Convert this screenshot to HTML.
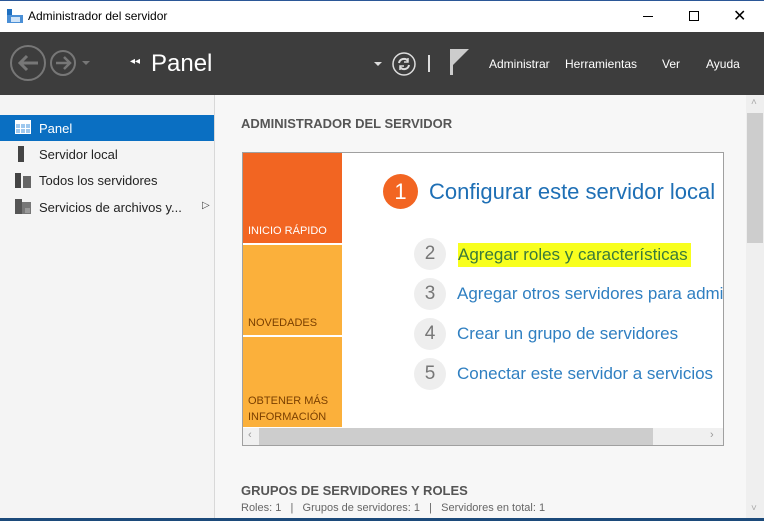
<!DOCTYPE html>
<html><head><meta charset="utf-8"><style>
*{margin:0;padding:0;box-sizing:border-box}
body{width:764px;height:521px;overflow:hidden;background:#f7f7f7;font-family:"Liberation Sans",sans-serif;position:relative}
.abs{position:absolute}
.t{white-space:nowrap}
</style></head><body>
<div class="abs" style="left:0;top:0;width:764px;height:1px;background:#2b5797"></div>
<div class="abs" style="left:0;top:1px;width:764px;height:31px;background:#fff"></div>
<svg class="abs" style="left:7px;top:9px" width="16" height="14"><rect x="0" y="0" width="5" height="6" fill="#1e6fc0"/><rect x="0" y="6" width="16" height="8" fill="#4a8fd6"/><rect x="4" y="8" width="9" height="5" fill="#cfe3f7"/></svg>
<div class="abs t" style="left:28px;top:9px;font-size:12px;color:#000">Administrador del servidor</div>
<div class="abs" style="left:643px;top:16px;width:10px;height:1px;background:#000"></div>
<div class="abs" style="left:689px;top:11px;width:10px;height:10px;border:1px solid #000"></div>
<div class="abs t" style="left:733px;top:6px;font-size:16px;color:#000">✕</div>
<div class="abs" style="left:0;top:32px;width:764px;height:63px;background:#3d3d3d"></div>
<svg class="abs" style="left:9px;top:44px" width="90" height="38">
<circle cx="19" cy="19" r="17" fill="none" stroke="#777" stroke-width="2"/>
<path d="M29 19H11M18 12l-7 7 7 7" fill="none" stroke="#777" stroke-width="3"/>
<circle cx="54" cy="19" r="12" fill="none" stroke="#777" stroke-width="2"/>
<path d="M47 19h13M55 13l6 6-6 6" fill="none" stroke="#777" stroke-width="2.5"/>
<path d="M73 17h8l-4 4z" fill="#777"/>
</svg>
<div class="abs t" style="left:130px;top:56px;font-size:10px;color:#fff">◂◂</div>
<div class="abs t" style="left:151px;top:50px;font-size:24px;color:#fff">Panel</div>
<div class="abs" style="left:374px;top:62px;width:0;height:0;border-left:4px solid transparent;border-right:4px solid transparent;border-top:4px solid #ddd"></div>
<svg class="abs" style="left:391px;top:51px" width="26" height="26"><circle cx="13" cy="13" r="11" fill="none" stroke="#ddd" stroke-width="1.5"/><path d="M8 12a5 5 0 0 1 9-2M18 14a5 5 0 0 1-9 2" fill="none" stroke="#ddd" stroke-width="2"/><path d="M17 7v4h-4M9 19v-4h4" fill="none" stroke="#ddd" stroke-width="1.5"/></svg>
<div class="abs" style="left:428px;top:55px;width:2px;height:17px;background:#ddd"></div>
<svg class="abs" style="left:449px;top:48px" width="22" height="28"><rect x="1" y="1" width="3" height="26" fill="#ccc"/><path d="M4 1h16l-16 16z" fill="#ccc"/></svg>
<div class="abs t" style="left:489px;top:57px;font-size:12px;color:#fff">Administrar</div>
<div class="abs t" style="left:565px;top:57px;font-size:12px;color:#fff">Herramientas</div>
<div class="abs t" style="left:662px;top:57px;font-size:12px;color:#fff">Ver</div>
<div class="abs t" style="left:706px;top:57px;font-size:12px;color:#fff">Ayuda</div>
<div class="abs" style="left:0;top:95px;width:215px;height:426px;background:#f4f4f4;border-right:1px solid #d8d8d8"></div>
<div class="abs" style="left:0;top:115px;width:214px;height:26px;background:#0a6fc2"></div>
<svg class="abs" style="left:15px;top:120px" width="16" height="14"><rect width="16" height="14" fill="#fff"/><g fill="#9ec8ee"><rect x="1" y="4" width="4" height="4"/><rect x="6" y="4" width="4" height="4"/><rect x="11" y="4" width="4" height="4"/><rect x="1" y="9" width="4" height="4"/><rect x="6" y="9" width="4" height="4"/><rect x="11" y="9" width="4" height="4"/></g></svg>
<div class="abs t" style="left:39px;top:121px;font-size:13px;color:#fff">Panel</div>
<div class="abs" style="left:18px;top:146px;width:6px;height:16px;background:#444"></div>
<div class="abs t" style="left:39px;top:147px;font-size:13px;color:#222">Servidor local</div>
<svg class="abs" style="left:15px;top:173px" width="16" height="15"><rect x="0" y="0" width="6" height="15" fill="#444"/><rect x="8" y="3" width="8" height="12" fill="#666"/></svg>
<div class="abs t" style="left:39px;top:173px;font-size:13px;color:#222">Todos los servidores</div>
<svg class="abs" style="left:15px;top:199px" width="16" height="15"><rect x="0" y="0" width="7" height="15" fill="#555"/><rect x="7" y="3" width="9" height="12" fill="#777"/><rect x="10" y="9" width="5" height="5" fill="#999"/></svg>
<div class="abs t" style="left:39px;top:200px;font-size:13px;color:#222">Servicios de archivos y...</div>
<div class="abs t" style="left:202px;top:200px;font-size:10px;color:#444">▷</div>
<div class="abs t" style="left:241px;top:116px;font-size:13px;font-weight:bold;color:#555">ADMINISTRADOR DEL SERVIDOR</div>
<div class="abs" style="left:242px;top:152px;width:482px;height:294px;background:#fff;border:1px solid #a0a0a0"></div>
<div class="abs" style="left:243px;top:153px;width:99px;height:90px;background:#f26522"></div>
<div class="abs t" style="left:248px;top:225px;font-size:11px;color:#fff">INICIO RÁPIDO</div>
<div class="abs" style="left:243px;top:245px;width:99px;height:90px;background:#fbb03b"></div>
<div class="abs t" style="left:248px;top:317px;font-size:11px;color:#7a3f00">NOVEDADES</div>
<div class="abs" style="left:243px;top:337px;width:99px;height:90px;background:#fbb03b"></div>
<div class="abs" style="left:248px;top:393px;font-size:11px;line-height:16px;color:#7a3f00">OBTENER MÁS<br>INFORMACIÓN</div>
<div class="abs" style="left:243px;top:428px;width:480px;height:17px;background:#f0f0f0"></div>
<div class="abs" style="left:259px;top:428px;width:394px;height:17px;background:#cdcdcd"></div>
<div class="abs t" style="left:248px;top:429px;font-size:11px;color:#999">‹</div>
<div class="abs t" style="left:710px;top:429px;font-size:11px;color:#999">›</div>
<div class="abs" style="left:383px;top:174px;width:35px;height:35px;border-radius:50%;background:#f26522;color:#fff;font-size:22px;text-align:center;line-height:35px">1</div>
<div class="abs t" style="left:429px;top:179px;font-size:22px;color:#1e6fb5;width:294px;overflow:hidden">Configurar este servidor local</div>
<div class="abs" style="left:414px;top:238px;width:32px;height:32px;border-radius:50%;background:#eee;color:#777;font-size:19px;text-align:center;line-height:32px">2</div>
<div class="abs t" style="left:458px;top:243px;font-size:17px;line-height:24px;color:#3a7a3a;background:#f8ff1e;padding-right:3px">Agregar roles y características</div>
<div class="abs" style="left:414px;top:278px;width:32px;height:32px;border-radius:50%;background:#eee;color:#777;font-size:19px;text-align:center;line-height:32px">3</div>
<div class="abs t" style="left:457px;top:284px;font-size:17px;color:#2f7fc1;width:266px;overflow:hidden">Agregar otros servidores para administrar</div>
<div class="abs" style="left:414px;top:318px;width:32px;height:32px;border-radius:50%;background:#eee;color:#777;font-size:19px;text-align:center;line-height:32px">4</div>
<div class="abs t" style="left:457px;top:324px;font-size:17px;color:#2f7fc1">Crear un grupo de servidores</div>
<div class="abs" style="left:414px;top:358px;width:32px;height:32px;border-radius:50%;background:#eee;color:#777;font-size:19px;text-align:center;line-height:32px">5</div>
<div class="abs t" style="left:457px;top:364px;font-size:17px;color:#2f7fc1;width:266px;overflow:hidden">Conectar este servidor a servicios</div>
<div class="abs t" style="left:241px;top:483px;font-size:13px;font-weight:bold;color:#555">GRUPOS DE SERVIDORES Y ROLES</div>
<div class="abs t" style="left:241px;top:502px;font-size:11px;color:#666">Roles: 1 &nbsp;&nbsp;| &nbsp;&nbsp;Grupos de servidores: 1 &nbsp;&nbsp;| &nbsp;&nbsp;Servidores en total: 1</div>
<div class="abs" style="left:746px;top:95px;width:18px;height:426px;background:#efefef"></div>
<div class="abs" style="left:747px;top:113px;width:16px;height:130px;background:#cdcdcd"></div>
<div class="abs t" style="left:751px;top:97px;font-size:10px;color:#aaa">˄</div>
<div class="abs t" style="left:751px;top:503px;font-size:10px;color:#aaa">˅</div>
<div class="abs" style="left:0;top:518px;width:764px;height:3px;background:#1c4a7a"></div>
</body></html>
